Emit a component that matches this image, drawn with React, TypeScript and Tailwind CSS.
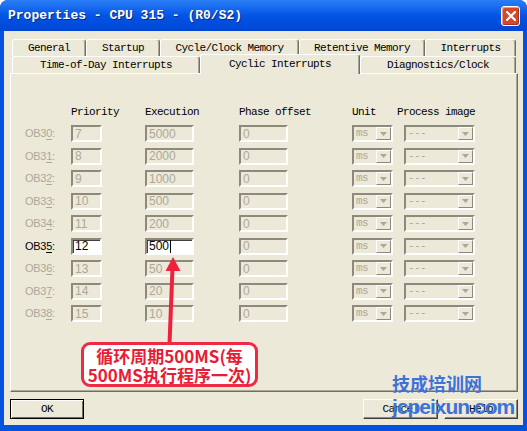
import React from "react";

const mono = "font-['Liberation_Mono','DejaVu_Sans_Mono',monospace] text-[11px] tracking-[-0.6px]";
const sans = "font-['Liberation_Sans',Arial,sans-serif]";
const cjk = "font-['Noto_Sans_CJK_SC','Noto_Sans',sans-serif]";

const rows = [
  { ob: "0", prio: "7", exec: "5000" },
  { ob: "1", prio: "8", exec: "2000" },
  { ob: "2", prio: "9", exec: "1000" },
  { ob: "3", prio: "10", exec: "500" },
  { ob: "4", prio: "11", exec: "200" },
  { ob: "5", prio: "12", exec: "500", on: true },
  { ob: "6", prio: "13", exec: "50" },
  { ob: "7", prio: "14", exec: "20" },
  { ob: "8", prio: "15", exec: "10" },
];

const sunken =
  "border-2 border-t-[#8d8a7d] border-l-[#8d8a7d] border-b-white border-r-white";

function Field({ value, width, on = false, caret = false }: { value: string; width: string; on?: boolean; caret?: boolean }) {
  return (
    <div
      className={`${width} h-[17px] flex items-center pl-[2px] ${sunken} ${sans} text-[12px] leading-none ${
        on ? "bg-white text-black shadow-[inset_1px_1px_0_#404040]" : "bg-[#ece9d8] text-[#aca899]"
      }`}
    >
      {value}
      {caret && <span className="w-[1px] h-[13px] bg-black ml-[1px]" />}
    </div>
  );
}

function Combo({ value, width }: { value: string; width: string }) {
  return (
    <div className={`${width} h-[17px] flex items-center ${sunken} bg-[#ece9d8]`}>
      <span className={`flex-1 pl-[2px] ${mono} text-[#aca899] leading-none`}>{value}</span>
      <span className="w-[15px] h-[13px] border border-t-white border-l-white border-b-[#8d8a7d] border-r-[#8d8a7d] bg-[#ece9d8] flex items-center justify-center">
        <svg width="7" height="4" viewBox="0 0 7 4">
          <path d="M0 0h7L3.5 4z" fill="#aca899" />
        </svg>
      </span>
    </div>
  );
}

function Tab({ label, width, active = false }: { label: string; width: string; active?: boolean }) {
  return (
    <div
      className={`${width} ${
        active ? "relative z-10 h-[20px] -mb-[1px]" : "h-[17px]"
      } rounded-t-[3px] border-t border-l border-r border-t-white border-l-white border-r-[#716f64] bg-[#ece9d8] shadow-[inset_-1px_0_0_#aca899] flex items-center justify-center ${mono} text-black`}
    >
      {label}
    </div>
  );
}

function Button({ label, width, primary = false }: { label: string; width: string; primary?: boolean }) {
  return (
    <div
      className={`${width} h-[20px] flex items-center justify-center bg-[#ece9d8] ${mono} text-black ${
        primary
          ? "border border-black shadow-[inset_1px_1px_0_#fff,inset_-1px_-1px_0_#716f64]"
          : "border border-t-white border-l-white border-b-[#404040] border-r-[#404040] shadow-[inset_-1px_-1px_0_#8d8a7d]"
      }`}
    >
      {label}
    </div>
  );
}

export default function App() {
  return (
    <div className="w-[527px] h-[431px] bg-white relative overflow-hidden">
      <div className="w-full h-full rounded-t-[8px] bg-[#0551e0] flex flex-col">
        {/* title bar */}
        <div className="h-[31px] rounded-t-[8px] flex items-center justify-between pl-[8px] pr-[7px] pt-[1px] bg-linear-to-b from-[#2a7ef5] via-[#0454e6] to-[#0046d2]">
          <span className="font-['Liberation_Mono',monospace] font-bold text-[13px] text-white [text-shadow:1px_1px_0_#0a2a80] whitespace-pre">
            Properties - CPU 315 - (R0/S2)
          </span>
          <div className="w-[19px] h-[20px] rounded-[3px] border border-white bg-[#d6482b] shadow-[inset_1px_1px_0_#f09a80,inset_-1px_-1px_0_#a8321a] flex items-center justify-center">
            <svg width="10" height="10" viewBox="0 0 10 10">
              <path d="M1 1L9 9M9 1L1 9" stroke="#fff" strokeWidth="2.2" strokeLinecap="square" />
            </svg>
          </div>
        </div>

        {/* body */}
        <div className="flex-1 mx-[4px] mb-[6px] bg-[#ece9d8] flex flex-col pl-[6px] pr-[5px] pt-[8px]">
          <div className="ml-[2px] w-[504px]">
            <div className="flex h-[17px]">
              <Tab label="General" width="w-[74px]" />
              <Tab label="Startup" width="w-[74px]" />
              <Tab label="Cycle/Clock Memory" width="w-[139px]" />
              <Tab label="Retentive Memory" width="w-[126px]" />
              <Tab label="Interrupts" width="w-[91px]" />
            </div>
            <div className="flex h-[17px] items-end">
              <Tab label="Time-of-Day Interrupts" width="w-[188px]" />
              <Tab label="Cyclic Interrupts" width="w-[160px]" active />
              <Tab label="Diagnostics/Clock" width="w-[156px]" />
            </div>
          </div>

          {/* panel */}
          <div className="w-[508px] h-[319px] border border-t-white border-l-white border-b-[#716f64] border-r-[#716f64] shadow-[inset_-1px_-1px_0_#aca899] pt-[32px] pl-[14px]">
            <div className={`flex h-[12px] leading-[12px] mb-[7px] ${mono} text-black`}>
              <span className="w-[46px]" />
              <span className="w-[74px]">Priority</span>
              <span className="w-[94px]">Execution</span>
              <span className="w-[113px]">Phase offset</span>
              <span className="w-[52px]">Unit</span>
              <span className="w-[71px] -ml-[7px] whitespace-nowrap">Process image</span>
            </div>
            {rows.map((r) => (
              <div key={r.ob} className="flex h-[22.5px] items-start">
                <span
                  className={`w-[46px] h-[17px] flex items-center ${sans} text-[11px] tracking-[-0.3px] ${
                    r.on ? "text-black" : "text-[#aca899]"
                  }`}
                >
                  OB3<u className="underline-offset-2">{r.ob}</u>:
                </span>
                <div className="w-[74px]">
                  <Field value={r.prio} width="w-[31px]" on={r.on} />
                </div>
                <div className="w-[94px]">
                  <Field value={r.exec} width="w-[49px]" on={r.on} caret={r.on} />
                </div>
                <div className="w-[113px]">
                  <Field value="0" width="w-[49px]" />
                </div>
                <div className="w-[52px]">
                  <Combo value="ms" width="w-[41px]" />
                </div>
                <Combo value="---" width="w-[71px]" />
              </div>
            ))}
          </div>

          {/* buttons */}
          <div className="mt-[7px] flex h-[20px]">
            <Button label="OK" width="w-[74px]" primary />
            <div className="ml-auto flex gap-[6px]">
              <Button label="Cancel" width="w-[75px]" />
              <Button label="Help" width="w-[74px]" />
            </div>
          </div>
        </div>
      </div>

      {/* red annotation */}
      <svg className="absolute left-[160px] top-[254px] pointer-events-none" width="25" height="92" viewBox="0 0 25 92">
        <path d="M9.5 90L12.5 14" stroke="#f0213d" strokeWidth="4" />
        <path d="M13 3L5.5 17H20.5Z" fill="#f0213d" />
      </svg>
      <div className="absolute left-[81px] top-[342px] w-[177px] h-[45px] border-[3px] border-[#ee2a44] rounded-[9px] bg-white flex flex-col items-center justify-center">
        <span className={`${cjk} font-bold text-[17px] leading-[19px] text-[#e81c34] whitespace-nowrap`}>循环周期500MS(每</span>
        <span className={`${cjk} font-bold text-[17px] leading-[19px] text-[#e81c34] whitespace-nowrap`}>500MS执行程序一次)</span>
      </div>

      {/* watermark */}
      <span className={`absolute left-[392px] top-[374px] ${cjk} font-bold text-[18px] leading-[18px] text-[#3e72d8] whitespace-nowrap`}>
        技成培训网
      </span>
      <span className={`absolute left-[392px] top-[395px] ${sans} font-bold text-[21px] leading-[23px] tracking-[-1px] text-[#3e72d8] whitespace-nowrap`}>
        jcpeixun.com
      </span>
    </div>
  );
}
